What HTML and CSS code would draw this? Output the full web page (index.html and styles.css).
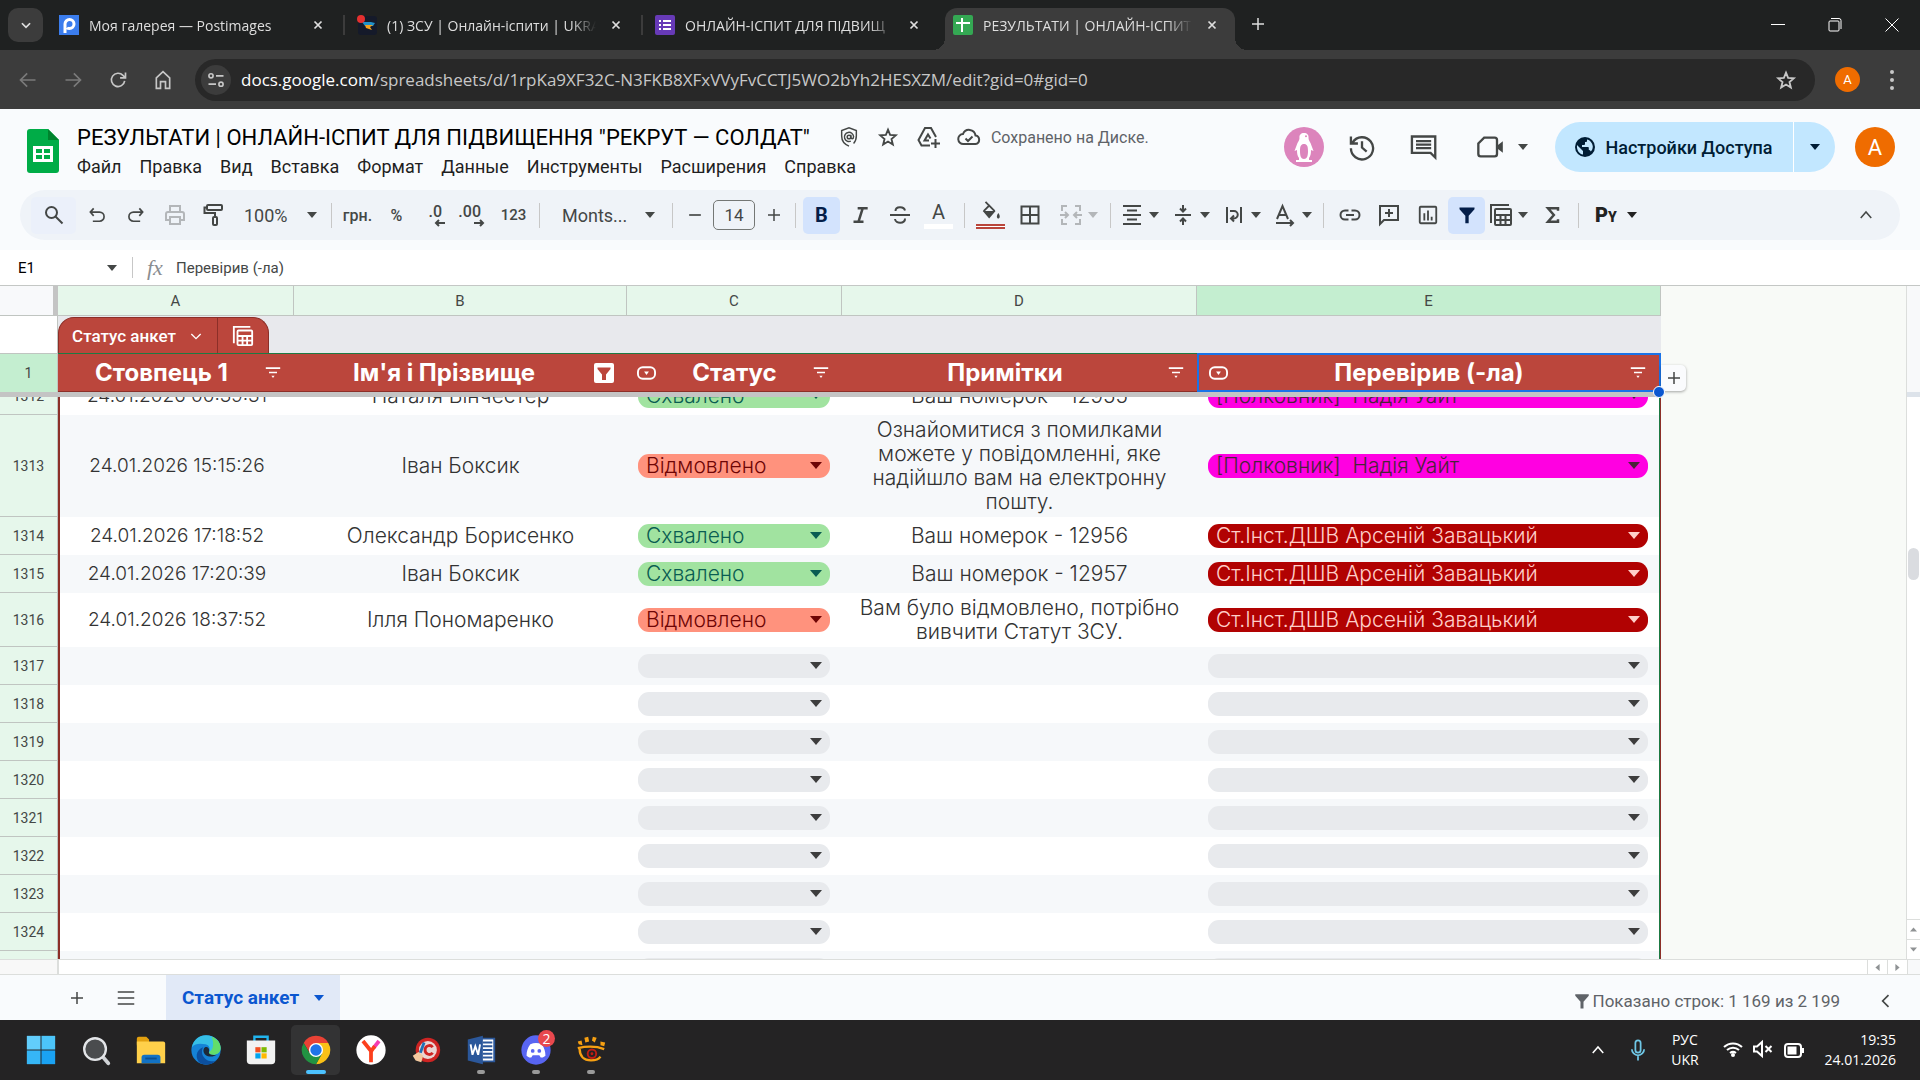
FILE: index.html
```html
<!DOCTYPE html>
<html lang="ru">
<head>
	<meta charset="UTF-8">
	<title>РЕЗУЛЬТАТИ | ОНЛАЙН-ІСПИТ</title>
	<link rel="stylesheet" href="styles.css">
</head>
<body>

	<!-- icon sprite -->
	<svg class="sprite" aria-hidden="true">
		<symbol id="i-close" viewBox="0 0 24 24"><path d="M6 6l12 12M18 6L6 18"/></symbol>
		<symbol id="i-plus" viewBox="0 0 24 24"><path d="M12 4v16M4 12h16"/></symbol>
		<symbol id="i-minus" viewBox="0 0 24 24"><path d="M5 12h14"/></symbol>
		<symbol id="i-down" viewBox="0 0 24 24"><path d="M5 9l7 7 7-7"/></symbol>
		<symbol id="i-up" viewBox="0 0 24 24"><path d="M5 16l7-8 7 8"/></symbol>
		<symbol id="i-left" viewBox="0 0 24 24"><path d="M15 5l-7 7 7 7"/></symbol>
		<symbol id="i-caret" viewBox="0 0 10 6"><path class="fill" d="M0 0h10L5 6z"/></symbol>
		<symbol id="i-star" viewBox="0 0 24 24"><path d="M12 4l2.300 5.700 6.200.500-4.700 4 1.500 6L12 17l-5.300 3.200 1.500-6-4.700-4 6.200-.5z"/></symbol>
		<symbol id="i-funnel" viewBox="0 0 24 24"><path class="fill" d="M3 3h18v2l-7 8v9h-4v-9L3 5z"/></symbol>
		<symbol id="i-sort" viewBox="0 0 20 16"><path d="M1 2.500h18M5 8h10"/><path class="fill" d="M8 12h4l-2 3z"/></symbol>
		<symbol id="i-type" viewBox="0 0 20 14"><rect x="1" y="1" width="18" height="12" rx="5"/><path class="fill" d="M7.500 5.500h5l-2.500 3.500z"/></symbol>
		<symbol id="i-calc" viewBox="0 0 24 24"><path d="M2 20V2h18"/><rect x="6" y="6" width="16" height="16" rx="1"/><path d="M6 12h16M6 17h16M11.500 12v10M16.500 12v10"/></symbol>
	</svg>

	<div class="tab-strip">
		<button class="tab-search" aria-label="Поиск вкладок"><svg class="s14"><use href="#i-down"/></svg></button>
		<div class="tabs">
			<div class="tab">
				<svg class="fav" viewBox="0 0 20 20"><rect class="c-post" width="20" height="20"/><path class="post-p" d="M6 18V9a4.500 4.500 0 1 1 4.500 4.500c-1 0-2-.3-2.500-.8"/></svg>
				<span class="tab-title">Моя галерея — Postimages</span>
				<button class="tab-close" aria-label="Закрыть"><svg class="s14"><use href="#i-close"/></svg></button>
			</div>
			<div class="tab">
				<svg class="fav" viewBox="0 0 20 20"><rect class="c-navy" x="1" y="1" width="19" height="19" rx="3"/><path fill="#2191c9" d="M5 7h9l4 1-2 3H8z"/><path fill="#f5a21d" d="M8 10h8l-3 2 2 3-6-2z"/><circle fill="#e5302f" cx="4" cy="4" r="4"/></svg>
				<span class="tab-title">(1) ЗСУ | Онлайн-іспити | UKRA</span>
				<button class="tab-close" aria-label="Закрыть"><svg class="s14"><use href="#i-close"/></svg></button>
			</div>
			<div class="tab">
				<svg class="fav" viewBox="0 0 20 20"><rect fill="#673ab7" width="20" height="20" rx="2"/><path stroke="#fff" stroke-width="2" d="M4 6h2M8 6h8M4 10h2M8 10h8M4 14h2M8 14h8"/></svg>
				<span class="tab-title">ОНЛАЙН-ІСПИТ ДЛЯ ПІДВИЩ</span>
				<button class="tab-close" aria-label="Закрыть"><svg class="s14"><use href="#i-close"/></svg></button>
			</div>
			<div class="tab active">
				<svg class="fav" viewBox="0 0 20 20"><rect fill="#34a853" width="20" height="20" rx="2"/><path stroke="#fff" stroke-width="2" d="M9 3v14M3 8h14"/></svg>
				<span class="tab-title">РЕЗУЛЬТАТИ | ОНЛАЙН-ІСПИТ</span>
				<button class="tab-close" aria-label="Закрыть"><svg class="s14"><use href="#i-close"/></svg></button>
			</div>
		</div>
		<button class="new-tab" aria-label="Новая вкладка"><svg class="s18"><use href="#i-plus"/></svg></button>
		<div class="window-btns">
			<button aria-label="Свернуть"><svg viewBox="0 0 14 14"><path d="M0 6.500h14"/></svg></button>
			<button aria-label="Восстановить"><svg viewBox="0 0 14 14"><rect x="1" y="3" width="10" height="10" rx="1"/><path d="M3 .5h8a2 2 0 0 1 2 2V11"/></svg></button>
			<button aria-label="Закрыть окно"><svg viewBox="0 0 14 14"><path d="M.5.5l13 13M13.500.5l-13 13"/></svg></button>
		</div>
	</div>

	<div class="address-row">
		<button class="nav dim" aria-label="Назад"><svg class="s20" viewBox="0 0 24 24"><path d="M21 12H4M11 4l-8 8 8 8"/></svg></button>
		<button class="nav dim" aria-label="Вперёд"><svg class="s20" viewBox="0 0 24 24"><path d="M3 12h17M13 4l8 8-8 8"/></svg></button>
		<button class="nav" aria-label="Обновить"><svg class="s20" viewBox="0 0 24 24"><path d="M20 13a8 8 0 1 1-2-6.500L20.500 9M21 3v6.500h-6.500"/></svg></button>
		<button class="nav" aria-label="Главная"><svg class="s20" viewBox="0 0 24 24"><path d="M4 9.500L12 2l8 7.500V22h-5v-8H9v8H4z"/></svg></button>
		<div class="omnibox">
			<button class="site-info" aria-label="Сведения о сайте"><svg class="s20" viewBox="0 0 24 24"><circle cx="6" cy="7" r="2.500"/><path d="M12 7h9M3 17h9"/><circle cx="18" cy="17" r="2.500"/></svg></button>
			<a class="url" href="#"><b>docs.google.com</b>/spreadsheets/d/1rpKa9XF32C-N3FKB8XFxVVyFvCCTJ5WO2bYh2HESXZM/edit?gid=0#gid=0</a>
			<button class="bookmark" aria-label="Добавить в закладки"><svg class="s22"><use href="#i-star"/></svg></button>
		</div>
		<button class="profile" aria-label="Профиль">A</button>
		<button class="more" aria-label="Меню"><svg viewBox="0 0 6 22"><circle cx="3" cy="3" r="2"/><circle cx="3" cy="11" r="2"/><circle cx="3" cy="19" r="2"/></svg></button>
	</div>

	<header class="doc-header">
		<svg class="logo" viewBox="0 0 32 44"><path fill="#00ac47" d="M3 0h18l11 11v30a3 3 0 0 1-3 3H3a3 3 0 0 1-3-3V3a3 3 0 0 1 3-3z"/><path fill="#00832d" d="M21 0l11 11H21z"/><path fill="#fff" fill-rule="evenodd" d="M6 17h20v16H6zm3 3v4h6v-4zm8 0v4h6v-4zm-8 6v4h6v-4zm8 0v4h6v-4z"/></svg>
		<div class="doc-main">
			<div class="title-row">
				<h1>РЕЗУЛЬТАТИ | ОНЛАЙН-ІСПИТ ДЛЯ ПІДВИЩЕННЯ "РЕКРУТ — СОЛДАТ"</h1>
				<div class="title-icons">
					<svg class="s22 fine" viewBox="0 0 24 24"><path d="M12 22C7 20 4 16 4 11V5l8-3 8 3v6c0 3-1 6-3 8"/><circle cx="12" cy="12" r="2"/><path d="M14 9.500V12c0 2.500 3 2.500 3-.5a5 5 0 1 0-3 5"/></svg>
					<svg class="s22"><use href="#i-star"/></svg>
					<svg class="s24" viewBox="0 0 24 24"><path d="M14 20.500H5.500L2.500 15 9 3h6l5 9M13 15.500H8.500L12 9.500l2.500 4M19.500 14v9M15 18.500h9"/></svg>
					<svg class="s24" viewBox="0 0 24 24"><path d="M6.500 19a5 5 0 0 1-.5-10A6.500 6.500 0 0 1 18.500 10.500a4.300 4.300 0 0 1 0 8.500zM8.500 13.500l2.500 2.500 4.500-4.500"/></svg>
				</div>
				<span class="saved">Сохранено на Диске.</span>
			</div>
			<nav class="menus">
				<button>Файл</button>
				<button>Правка</button>
				<button>Вид</button>
				<button>Вставка</button>
				<button>Формат</button>
				<button>Данные</button>
				<button>Инструменты</button>
				<button>Расширения</button>
				<button>Справка</button>
			</nav>
		</div>
		<div class="doc-side">
			<div class="anon"><svg viewBox="0 0 40 40"><path fill="#fff" fill-rule="evenodd" d="M20 6c3 0 5 2 4.500 5 0 2 1 3 2 5l3 8-2.500-1c0 4-.5 6-2 8v2h3v2H12v-2h3v-2c-1.500-2-2-4-2-8l-2.500 1 3-8c1-2 2-3 2-5C15 8 17 6 20 6zm0 11c-3 0-4 2-4 7s1 8 4 8 4-3 4-8-1-7-4-7zM21 9.200a1 1 0 1 0 2 0 1 1 0 0 0-2 0z"/></svg></div>
			<button aria-label="История версий"><svg class="s28" viewBox="0 0 24 24"><path d="M2.500 3v6h6M4 8a9.500 9.500 0 1 1-1.500 5M12 7v5.500l4 3.500"/></svg></button>
			<button aria-label="Комментарии"><svg class="s28" viewBox="0 0 24 24"><path d="M2.500 3h20v18l-4-4h-16zM6 7h13M6 10h13M6 13h13"/></svg></button>
			<button class="meet" aria-label="Видеовстреча"><svg class="s28" viewBox="0 0 24 24"><path d="M7 4h9a2 2 0 0 1 2 2v12a2 2 0 0 1-2 2H4a2 2 0 0 1-2-2V9z"/><path class="fill" d="M18 11l5-4v10l-5-4z"/></svg><svg class="caret"><use href="#i-caret"/></svg></button>
			<div class="share">
				<button class="share-main"><svg class="globe" viewBox="0 0 20 20"><circle class="fill" cx="10" cy="10" r="10"/><path fill="#c2e7ff" d="M2 8l6 6v3.500C4 17 1.500 13 2 8zM12 2.500c3 .5 5.500 3.500 5.800 7 0 2-.8 4-2 5-.5-1-1-1.500-2-1.500V11c0-.6-.4-1-1-1H7V8h2c.5 0 1-.5 1-1V5h1c.600 0 1-.5 1-1z"/></svg>Настройки Доступа</button>
				<button class="share-more" aria-label="Быстрые действия"><svg class="caret"><use href="#i-caret"/></svg></button>
			</div>
			<button class="account" aria-label="Аккаунт">A</button>
		</div>
	</header>

	<div class="toolbar-wrap">
		<div class="toolbar">
			<button class="find" aria-label="Поиск"><svg class="s24" viewBox="0 0 24 24"><circle cx="9.500" cy="9.500" r="5.500"/><path d="M13.500 13.500l7 7"/></svg></button>
			<button aria-label="Отменить"><svg class="s20" viewBox="0 0 24 24"><path d="M8 4L4 8.500 8 13M4.500 8.500H15a5 5 0 0 1 0 11H7"/></svg></button>
			<button aria-label="Повторить"><svg class="s20" viewBox="0 0 24 24"><path d="M16 4l4 4.500-4 4.500M19.500 8.500H9a5 5 0 0 0 0 11h8"/></svg></button>
			<button class="off" aria-label="Печать"><svg class="s24" viewBox="0 0 24 24"><path d="M7 8V3h10v5M7 17H3v-6a2 2 0 0 1 2-2h14a2 2 0 0 1 2 2v6h-4M7 14h10v7H7z"/></svg></button>
			<button aria-label="Копировать форматирование"><svg class="s24" viewBox="0 0 24 24"><rect x="5" y="2" width="15" height="5" rx="1"/><path d="M5 4.500H2.500V10H13v4"/><rect x="11" y="14" width="4" height="8" rx="1"/></svg></button>
			<button class="combo zoom">100%<svg class="caret"><use href="#i-caret"/></svg></button>
			<i class="sep"></i>
			<button class="word">грн.</button>
			<button class="word">%</button>
			<button aria-label="Меньше знаков"><span class="dec">.0</span><svg class="dec-arrow" viewBox="0 0 12 8"><path d="M11 4H2M5 1L2 4l3 3"/></svg></button>
			<button aria-label="Больше знаков"><span class="dec">.00</span><svg class="dec-arrow" viewBox="0 0 12 8"><path d="M1 4h9M7 1l3 3-3 3"/></svg></button>
			<button class="num">123</button>
			<i class="sep"></i>
			<button class="combo font">Monts...<svg class="caret"><use href="#i-caret"/></svg></button>
			<i class="sep"></i>
			<button class="step" aria-label="Уменьшить"><svg class="s20"><use href="#i-minus"/></svg></button>
			<input class="size" type="text" value="14" aria-label="Размер шрифта">
			<button class="step" aria-label="Увеличить"><svg class="s18"><use href="#i-plus"/></svg></button>
			<i class="sep"></i>
			<button class="on bold">B</button>
			<button aria-label="Курсив"><svg class="s20" viewBox="0 0 24 24"><path class="thick" d="M8 4h12M3 20h12M14 4l-5 16"/></svg></button>
			<button aria-label="Зачёркнутый"><svg class="s24" viewBox="0 0 24 24"><path d="M2 12h20M17 7.500C16 3 7.500 3 7.500 8M7 16c.5 5 10.500 5 10-.5"/></svg></button>
			<button class="colored text-color">A</button>
			<i class="sep"></i>
			<button class="colored fill-color" aria-label="Цвет заливки"><svg class="s22" viewBox="0 0 24 24"><path d="M6 1l4 4M4 11l6-6 6 6"/><path class="fill" d="M3 11h14l-7 8zM20 13c3 4 1 6 0 6s-3-2 0-6z"/></svg></button>
			<button aria-label="Границы"><svg class="s24" viewBox="0 0 24 24"><path d="M3.500 3.500h17v17h-17zM12 4v16M4 12h16"/></svg></button>
			<button class="drop merge off" aria-label="Объединить"><svg class="s24" viewBox="0 0 24 24"><path d="M8 3H3v5M3 16v5h5M16 3h5v5M21 16v5h-5M1 12h8M6 9l3 3-3 3M23 12h-8M18 9l-3 3 3 3"/></svg><svg class="caret"><use href="#i-caret"/></svg></button>
			<i class="sep"></i>
			<div class="drops">
				<button class="drop" aria-label="По горизонтали"><svg class="s24" viewBox="0 0 24 24"><path d="M3 3h18M7 7.500h10M3 12h18M7 16.500h10M3 21h18"/></svg><svg class="caret"><use href="#i-caret"/></svg></button>
				<button class="drop" aria-label="По вертикали"><svg class="s24" viewBox="0 0 24 24"><path d="M4 12h16M12 2v6M9 5.500L12 8.500l3-3M12 22v-6M9 18.500l3-3 3 3"/></svg><svg class="caret"><use href="#i-caret"/></svg></button>
				<button class="drop" aria-label="Перенос текста"><svg class="s24" viewBox="0 0 24 24"><path d="M5 4v16M19 4v16M8 8h4a3.500 3.500 0 0 1 0 7.500H9M12 12.500l-3 3 3 3"/></svg><svg class="caret"><use href="#i-caret"/></svg></button>
				<button class="drop" aria-label="Поворот текста"><svg class="s24" viewBox="0 0 24 24"><path d="M4 16L9.500 3l5.500 13M6 12h7M3 20h17M17 17l3 3-3 3"/></svg><svg class="caret"><use href="#i-caret"/></svg></button>
			</div>
			<i class="sep"></i>
			<button aria-label="Ссылка"><svg class="s24" viewBox="0 0 24 24"><path d="M10.500 7.500H7a4.500 4.500 0 0 0 0 9h3.500M13.500 7.500H17a4.500 4.500 0 0 1 0 9h-3.500M8 12h8"/></svg></button>
			<button aria-label="Комментарий"><svg class="s24" viewBox="0 0 24 24"><path d="M3 21V3h18v14H7zM12 6v8M8 10h8"/></svg></button>
			<button aria-label="Диаграмма"><svg class="s22" viewBox="0 0 24 24"><rect x="3" y="3" width="18" height="18" rx="1"/><path d="M8 10v8M12 7v11M16 14v4"/></svg></button>
			<button class="on" aria-label="Фильтр"><svg class="s20"><use href="#i-funnel"/></svg></button>
			<button class="drop" aria-label="Таблицы"><svg class="s24"><use href="#i-calc"/></svg><svg class="caret"><use href="#i-caret"/></svg></button>
			<button aria-label="Функции"><svg class="s20" viewBox="0 0 24 24"><path class="thick" d="M18 7V4H6l7 8-7 8h12v-3"/></svg></button>
			<i class="sep"></i>
			<button class="py">P<small>Y</small><svg class="caret"><use href="#i-caret"/></svg></button>
			<button class="collapse" aria-label="Скрыть меню"><svg class="s18"><use href="#i-up"/></svg></button>
		</div>
	</div>

	<div class="formula">
		<div class="name-box"><input type="text" value="E1" aria-label="Ячейка"><svg class="caret"><use href="#i-caret"/></svg></div>
		<label class="fx" for="fx">fx</label>
		<input id="fx" type="text" value="Перевірив (-ла)">
	</div>

	<main class="grid">
		<div class="cells">
			<table class="frozen">
				<colgroup><col class="w-n"><col class="w-a"><col class="w-b"><col class="w-c"><col class="w-d"><col class="w-e"></colgroup>
				<tr class="letters"><th class="corner"></th><th>A</th><th>B</th><th>C</th><th>D</th><th class="sel">E</th></tr>
				<tr class="band">
					<td></td>
					<td colspan="5">
						<div class="table-tab">
							<button class="table-name">Статус анкет<svg class="s16"><use href="#i-down"/></svg></button>
							<button class="table-view" aria-label="Вид таблицы"><svg class="s22"><use href="#i-calc"/></svg></button>
						</div>
					</td>
				</tr>
				<tr class="heads">
					<th class="rn">1</th>
					<th><div class="head"><span>Стовпець 1</span><svg class="sort"><use href="#i-sort"/></svg></div></th>
					<th><div class="head"><span>Ім'я і Прізвище</span><svg class="filtered" viewBox="0 0 20 20"><rect width="20" height="20" rx="2"/><path d="M3.500 4.500h13v1.500L12 11.500V17H8v-5.500L3.500 6z"/></svg></div></th>
					<th><div class="head"><svg class="type"><use href="#i-type"/></svg><span>Статус</span><svg class="sort"><use href="#i-sort"/></svg></div></th>
					<th><div class="head"><span>Примітки</span><svg class="sort"><use href="#i-sort"/></svg></div></th>
					<th class="picked"><div class="head"><svg class="type"><use href="#i-type"/></svg><span>Перевірив (-ла)</span><svg class="sort"><use href="#i-sort"/></svg></div><i class="handle"></i><button class="add-col" aria-label="Добавить столбец"><svg class="s18"><use href="#i-plus"/></svg></button></th>
				</tr>
			</table>
			<div class="freeze-bar"></div>
			<div class="scroller">
				<table class="rows">
					<colgroup><col class="w-n"><col class="w-a"><col class="w-b"><col class="w-c"><col class="w-d"><col class="w-e"></colgroup>
					<tbody>
						<tr><th>1312</th><td>24.01.2026 00:39:31</td><td>Наталя Вінчестер</td><td><div class="chip ok"><select aria-label="Статус 1312"><option>Схвалено</option></select></div></td><td>Ваш номерок - 12955</td><td><div class="chip pink"><select aria-label="Перевірив 1312"><option>[Полковник]&nbsp; Надія Уайт</option></select></div></td></tr>
						<tr><th>1313</th><td>24.01.2026 15:15:26</td><td>Іван Боксик</td><td><div class="chip no"><select aria-label="Статус 1313"><option>Відмовлено</option></select></div></td><td>Ознайомитися з помилками можете у повідомленні, яке надійшло вам на електронну пошту.</td><td><div class="chip pink"><select aria-label="Перевірив 1313"><option>[Полковник]&nbsp; Надія Уайт</option></select></div></td></tr>
						<tr><th>1314</th><td>24.01.2026 17:18:52</td><td>Олександр Борисенко</td><td><div class="chip ok"><select aria-label="Статус 1314"><option>Схвалено</option></select></div></td><td>Ваш номерок - 12956</td><td><div class="chip dark"><select aria-label="Перевірив 1314"><option>Ст.Інст.ДШВ Арсеній Завацький</option></select></div></td></tr>
						<tr><th>1315</th><td>24.01.2026 17:20:39</td><td>Іван Боксик</td><td><div class="chip ok"><select aria-label="Статус 1315"><option>Схвалено</option></select></div></td><td>Ваш номерок - 12957</td><td><div class="chip dark"><select aria-label="Перевірив 1315"><option>Ст.Інст.ДШВ Арсеній Завацький</option></select></div></td></tr>
						<tr><th>1316</th><td>24.01.2026 18:37:52</td><td>Ілля Пономаренко</td><td><div class="chip no"><select aria-label="Статус 1316"><option>Відмовлено</option></select></div></td><td>Вам було відмовлено, потрібно вивчити Статут ЗСУ.</td><td><div class="chip dark"><select aria-label="Перевірив 1316"><option>Ст.Інст.ДШВ Арсеній Завацький</option></select></div></td></tr>
						<tr><th>1317</th><td></td><td></td><td><div class="chip"><select aria-label="Статус 1317"></select></div></td><td></td><td><div class="chip"><select aria-label="Перевірив 1317"></select></div></td></tr>
						<tr><th>1318</th><td></td><td></td><td><div class="chip"><select aria-label="Статус 1318"></select></div></td><td></td><td><div class="chip"><select aria-label="Перевірив 1318"></select></div></td></tr>
						<tr><th>1319</th><td></td><td></td><td><div class="chip"><select aria-label="Статус 1319"></select></div></td><td></td><td><div class="chip"><select aria-label="Перевірив 1319"></select></div></td></tr>
						<tr><th>1320</th><td></td><td></td><td><div class="chip"><select aria-label="Статус 1320"></select></div></td><td></td><td><div class="chip"><select aria-label="Перевірив 1320"></select></div></td></tr>
						<tr><th>1321</th><td></td><td></td><td><div class="chip"><select aria-label="Статус 1321"></select></div></td><td></td><td><div class="chip"><select aria-label="Перевірив 1321"></select></div></td></tr>
						<tr><th>1322</th><td></td><td></td><td><div class="chip"><select aria-label="Статус 1322"></select></div></td><td></td><td><div class="chip"><select aria-label="Перевірив 1322"></select></div></td></tr>
						<tr><th>1323</th><td></td><td></td><td><div class="chip"><select aria-label="Статус 1323"></select></div></td><td></td><td><div class="chip"><select aria-label="Перевірив 1323"></select></div></td></tr>
						<tr><th>1324</th><td></td><td></td><td><div class="chip"><select aria-label="Статус 1324"></select></div></td><td></td><td><div class="chip"><select aria-label="Перевірив 1324"></select></div></td></tr>
						<tr><th></th><td></td><td></td><td><div class="chip"><select aria-label="Статус 1325"></select></div></td><td></td><td><div class="chip"><select aria-label="Перевірив 1325"></select></div></td></tr>
					</tbody>
				</table>
			</div>
		</div>
		<div class="vscroll">
			<div class="vscroll-top"></div>
			<div class="track"><i class="thumb"></i></div>
			<button class="arrow up" aria-label="Вверх"><svg class="tiny"><use href="#i-caret"/></svg></button>
			<button class="arrow" aria-label="Вниз"><svg class="tiny"><use href="#i-caret"/></svg></button>
		</div>
	</main>
	<div class="hscroll">
		<i class="hscroll-corner"></i>
		<button class="arrow prev" aria-label="Влево"><svg class="tiny"><use href="#i-caret"/></svg></button>
		<button class="arrow next" aria-label="Вправо"><svg class="tiny"><use href="#i-caret"/></svg></button>
		<i class="hscroll-end"></i>
	</div>

	<footer class="sheets">
		<button class="sheet-btn" aria-label="Добавить лист"><svg class="s18"><use href="#i-plus"/></svg></button>
		<button class="sheet-btn" aria-label="Все листы"><svg class="s18" viewBox="0 0 24 24"><path d="M1 4h22M1 12h22M1 20h22"/></svg></button>
		<button class="sheet-tab">Статус анкет<svg class="caret"><use href="#i-caret"/></svg></button>
		<p class="count"><svg class="s18"><use href="#i-funnel"/></svg>Показано строк: 1 169 из 2 199</p>
		<button class="side-toggle" aria-label="Боковая панель"><svg class="s20"><use href="#i-left"/></svg></button>
	</footer>

	<div class="taskbar">
		<div class="apps">
			<button aria-label="Пуск"><svg viewBox="0 0 36 36"><path fill="#62cdfb" d="M3 3h14.500v14.500H3z"/><path fill="#4cc5fa" d="M18.500 3H33v14.500H18.500z"/><path fill="#36b6f6" d="M3 18.500h14.500V33H3z"/><path fill="#1aa2f3" d="M18.500 18.500H33V33H18.500z"/></svg></button>
			<button aria-label="Поиск"><svg viewBox="0 0 36 36"><path stroke="#cfd2d6" stroke-width="4" stroke-linecap="round" d="M25 25l6 7"/><circle cx="17" cy="17" r="11.500" fill="#4a4c4e" stroke="#e3e5e8" stroke-width="2.500"/></svg></button>
			<button aria-label="Проводник"><svg viewBox="0 0 36 36"><path fill="#e2a00f" d="M3 6a2 2 0 0 1 2-2h8l3 3v6H3z"/><path fill="#ffd04a" d="M3 9h28a2 2 0 0 1 2 2v21H3z"/><path fill="#1272c4" d="M8 32v-6a3 3 0 0 1 3-3h14a3 3 0 0 1 3 3v6z"/><path stroke="#0a4f91" stroke-width="2" d="M12 27h12"/></svg></button>
			<button aria-label="Edge"><svg viewBox="0 0 36 36"><circle cx="18" cy="18" r="15.500" fill="#1583d6"/><path fill="#36bfe6" d="M3 15C5 7 11 2.500 18 2.500c9 0 15.500 6 15.500 13.500 0 4-3 7-7 7-4 0-6-1-5-3 1-4 0-7-4-8-6-1-11-1-14.500 3z"/><path fill="#62dd6a" d="M24 4c6 2 9.500 7 9.500 12 0 4-3 7-7 7-4 0-6-1-5-3 3-1 6-7 2.500-16z"/><path fill="#0c4f9e" d="M15 15c-4 7 2 15 10 15 2 0 4-1 5-2.500-4 6-12 7.500-18 4.500-6-5-5-14 3-17z"/><path fill="#1d2a38" d="M17 15c-3 2-2 8 3 9.500 4 1 7 0 9-1.500-4 1-8 0-8-2.500 1-3 0-6-4-5.500z"/></svg></button>
			<button aria-label="Microsoft Store"><svg viewBox="0 0 36 36"><path fill="none" stroke="#21b4ee" stroke-width="2.500" d="M11 10V4h14v6"/><path fill="#f2f2f2" d="M3 8h30v21a4 4 0 0 1-4 4H7a4 4 0 0 1-4-4z"/><path fill="#f25022" d="M12 15h5.500v5.500H12z"/><path fill="#7fba00" d="M18.500 15H24v5.500h-5.500z"/><path fill="#00a4ef" d="M12 21.500h5.500V27H12z"/><path fill="#ffb900" d="M18.500 21.500H24V27h-5.500z"/></svg></button>
			<button class="current" aria-label="Chrome"><svg viewBox="0 0 36 36"><path fill="#e94235" d="M5 10.500A15 15 0 0 1 31 10.500H18l-6.500 11z"/><path fill="#fbc116" d="M31 10.500A15 15 0 0 1 18 33l6.500-11.500L18 10.500z"/><path fill="#229342" d="M5 10.500l6.500 11.200 13 0L18 33A15 15 0 0 1 5 10.500z"/><circle cx="18" cy="18" r="7.500" fill="#fff"/><circle cx="18" cy="18" r="6" fill="#1f74e8"/></svg></button>
			<button aria-label="Яндекс"><svg viewBox="0 0 36 36"><circle cx="18" cy="18" r="15.500" fill="#fff"/><path fill="none" stroke="#fc3f1d" stroke-width="4" d="M9.500 8.500L18 19v12"/><path fill="none" stroke="#f43cb0" stroke-width="4" d="M26.500 8.500L21 15.500"/><path fill="none" stroke="#fc3f1d" stroke-width="4" d="M22 14l-4 5.500"/></svg></button>
			<button aria-label="CCleaner"><svg viewBox="0 0 36 36"><circle cx="20" cy="18" r="13" fill="#ce2423"/><circle cx="20" cy="18" r="9.500" fill="#e9d6d4"/><path fill="none" stroke="#ce2423" stroke-width="3" d="M25 15c-2-3-8-2-8 3s6 6 8 3"/><path stroke="#1f6fb5" stroke-width="3" d="M16 10l-4 11"/><path fill="#f3c9a0" d="M4 24l6-4 5 4-2 7-6-2z"/></svg></button>
			<button class="running" aria-label="Word"><svg viewBox="0 0 36 36"><path fill="#fff" stroke="#2b579a" stroke-width="2" d="M18 6h14v24H18z"/><path stroke="#2b579a" stroke-width="2" d="M20 10h10M20 14h10M20 18h10M20 22h10M20 26h10"/><path fill="#2b579a" d="M4 7l16-4v30L4 29z"/><path fill="none" stroke="#fff" stroke-width="2" d="M7 12l2 11 3-9 3 9 2-11"/></svg></button>
			<button class="running" aria-label="Discord"><svg viewBox="0 0 36 36"><circle cx="18" cy="18" r="15.500" fill="#5865f2"/><path fill="#fff" d="M12 12c4-2 8-2 12 0 3 4 4 8 4 12-2 2-4 2-5 2l-1.500-2.500h-7L13 26c-1 0-3 0-5-2 0-4 1-8 4-12z"/><circle cx="14.500" cy="19" r="2" fill="#5865f2"/><circle cx="21.500" cy="19" r="2" fill="#5865f2"/></svg><span class="badge">2</span></button>
			<button class="running" aria-label="Просмотр"><svg viewBox="0 0 36 36"><path fill="none" stroke="#f7a012" stroke-width="2.500" d="M4 16c9-2 20-2 28 1M6 17c0 7 4 12 12 12 5 0 8-1 10-4"/><circle cx="19" cy="22" r="4.500" fill="none" stroke="#c21d12" stroke-width="2"/><circle cx="19" cy="22" r="1.500" fill="#c21d12"/><path fill="#f7a012" d="M4 9l4-1 1 5-4-1zM11 5l4-1 1 5-4 1zM20 4l4 1-2 5-3-2zM28 9l5 1-1 4-4-1z"/></svg></button>
		</div>
		<div class="tray">
			<svg class="s18 tray-up"><use href="#i-up"/></svg>
			<svg class="mic" viewBox="0 0 16 24"><rect x="5" y="1" width="6" height="14" rx="3"/><path d="M1 11a7 7 0 0 0 14 0M8 18v6"/></svg>
			<div class="lang">РУС<br>UKR</div>
			<div class="status">
				<svg class="s20" viewBox="0 0 20 20"><path d="M1 8a13 13 0 0 1 18 0M4 11a9 9 0 0 1 12 0M7 14a5 5 0 0 1 6 0"/><circle class="fill" cx="10" cy="16" r="2"/></svg>
				<svg class="s20" viewBox="0 0 20 20"><path d="M1 7.500h3L9 3v14l-5-4.500H1zM12.500 7l6 6M18.500 7l-6 6"/></svg>
				<svg class="s22" viewBox="0 0 22 20"><rect x="2" y="4" width="16" height="13" rx="3"/><path class="fill" d="M4.500 6.500h9v8h-9zM19 8h2v5h-2z"/></svg>
			</div>
			<div class="clock">19:35<br>24.01.2026</div>
		</div>
	</div>

</body>
</html>
```

FILE: styles.css
```css
*{
	margin: 0;
	padding: 0;
	box-sizing: border-box;
}
body{
	height: 100vh;
	display: flex;
	flex-direction: column;
	overflow: hidden;
	font-family: Roboto, "Liberation Sans", sans-serif;
	color: #1f1f1f;
	background: #fff;
}
button, input, select{
	font: inherit;
	color: inherit;
	border: 0;
	background: none;
}
button{
	display: flex;
	align-items: center;
	justify-content: center;
	cursor: pointer;
	white-space: nowrap;
}
svg{
	flex: none;
	fill: none;
	stroke: currentColor;
	stroke-width: 2;
}
.sprite{
	display: none;
}
.fill{
	fill: currentColor;
	stroke: none;
}
.thick{
	stroke-width: 3;
}
.fine{
	stroke-width: 1.6;
}
.s14{ width: 14px; height: 14px; }
.s16{ width: 16px; height: 16px; }
.s18{ width: 18px; height: 18px; }
.s20{ width: 20px; height: 20px; }
.s22{ width: 22px; height: 22px; }
.s24{ width: 24px; height: 24px; }
.s28{ width: 28px; height: 28px; }
.caret{
	width: 10px;
	height: 6px;
}

/* browser tabs */
.tab-strip{
	height: 50px;
	display: flex;
	background: #1f2121;
	color: #dedede;
	font-family: "Open Sans", "Noto Sans", sans-serif;
	font-size: 14px;
}
.tab-search{
	width: 35px;
	height: 34px;
	margin: 8px;
	border-radius: 10px;
	background: #3c3c3c;
}
.tab-search svg, .tab-close svg{
	stroke-width: 3;
}
.tabs{
	display: flex;
	gap: 8px;
	padding-top: 8px;
}
.tab{
	width: 290px;
	padding: 0 15px 8px 8px;
	display: flex;
	align-items: center;
	position: relative;
}
.tab + .tab:not(.active):before{
	content: "";
	position: absolute;
	left: -6px;
	top: 7px;
	width: 2px;
	height: 20px;
	background: #3c3c3c;
}
.tab.active{
	background: #3c3c3c;
	border-radius: 12px 12px 0 0;
}
.tab.active:before, .tab.active:after{
	content: "";
	position: absolute;
	bottom: 0;
	width: 12px;
	height: 12px;
}
.tab.active:before{
	left: -12px;
	background: radial-gradient(circle at 0 0, #1f2121 12px, #3c3c3c 12px);
}
.tab.active:after{
	right: -12px;
	background: radial-gradient(circle at 100% 0, #1f2121 12px, #3c3c3c 12px);
}
.fav{
	width: 20px;
	height: 20px;
	stroke: none;
}
.c-post{
	fill: #3b7ded;
}
.post-p{
	stroke: #fff;
	stroke-width: 3;
}
.c-navy{
	fill: #151a2a;
}
.tab-title{
	flex: 1;
	min-width: 0;
	margin: 0 12px 0 10px;
	overflow: hidden;
	white-space: nowrap;
	mask-image: linear-gradient(to right, #000 88%, transparent);
}
.tab-close{
	width: 16px;
	height: 20px;
}
.new-tab{
	width: 30px;
	margin: 0 0 0 8px;
	padding-bottom: 2px;
}
.window-btns{
	margin-left: auto;
	display: flex;
}
.window-btns button{
	width: 57px;
}
.window-btns svg{
	width: 14px;
	height: 14px;
	stroke: #fff;
	stroke-width: 1;
}

.address-row{
	height: 59px;
	display: flex;
	align-items: center;
	background: #3c3c3c;
	color: #c7c7c7;
	padding: 0 8px 0 5px;
}
.nav{
	width: 45px;
	height: 40px;
}
.nav.dim{
	color: #7a7a7a;
}
.omnibox{
	flex: 1;
	height: 42px;
	margin: 0 20px 0 10px;
	padding: 0 18px 0 6px;
	display: flex;
	align-items: center;
	border-radius: 21px;
	background: #282828;
	font-family: "Open Sans", "Noto Sans", sans-serif;
	font-size: 17px;
}
.site-info{
	width: 30px;
	height: 30px;
	border-radius: 50%;
	background: #3c3c3c;
}
.url{
	flex: 1;
	margin-left: 10px;
	color: #c7c7c7;
	text-decoration: none;
}
.url b{
	font-weight: normal;
	color: #fff;
}
.profile{
	width: 25px;
	height: 25px;
	border-radius: 50%;
	background: #ef6c00;
	color: #fff;
	font-size: 13px;
}
.more{
	width: 40px;
	margin-left: 12px;
}
.more svg{
	width: 6px;
	height: 22px;
	fill: #c7c7c7;
	stroke: none;
}

/* document header */
.doc-header{
	height: 81px;
	padding: 0 25px 0 27px;
	display: flex;
	background: #f9fbfd;
	color: #444746;
}
.logo{
	width: 32px;
	height: 44px;
	margin-top: 20px;
	stroke: none;
}
.doc-main{
	padding: 12px 0 0 9px;
}
.title-row{
	height: 32px;
	padding-left: 9px;
	display: flex;
	align-items: center;
}
.title-row h1{
	font-size: 22px;
	font-weight: normal;
	color: #000;
	white-space: nowrap;
}
.title-icons{
	display: flex;
	align-items: center;
	gap: 17px;
	margin: 0 10px 0 28px;
}
.saved{
	font-size: 16px;
	color: #5f6368;
}
.menus{
	display: flex;
}
.menus button{
	height: 26px;
	padding: 0 9px;
	font-size: 18px;
	color: #1f1f1f;
}
.doc-side{
	margin-left: auto;
	height: 76px;
	display: flex;
	align-items: center;
}
.doc-side > button{
	width: 61px;
}
.anon{
	width: 40px;
	height: 40px;
	margin-right: 7px;
	border-radius: 50%;
	background: #dc84bc;
}
.anon svg{
	width: 40px;
	height: 40px;
	stroke: none;
}
.doc-side .meet{
	width: 94px;
	gap: 14px;
	padding-left: 4px;
}
.share{
	height: 50px;
	display: flex;
	border-radius: 25px;
	background: #c2e7ff;
	color: #001d35;
	margin: 0 20px 0 8px;
}
.share-main{
	width: 238px;
	gap: 10px;
	font-size: 18px;
	font-weight: 500;
}
.globe{
	width: 20px;
	height: 20px;
	stroke: none;
}
.share-more{
	width: 42px;
	border-left: 1px solid #fff;
}
.doc-side > .account{
	width: 40px;
	height: 40px;
	border-radius: 50%;
	background: #ef6c00;
	color: #fff;
	font-size: 22px;
}

/* toolbar */
.toolbar-wrap{
	height: 60px;
	padding: 0 20px 10px;
	background: #f9fbfd;
}
.toolbar{
	height: 50px;
	padding: 0 16px 0 11px;
	display: flex;
	align-items: center;
	gap: 2px;
	border-radius: 25px;
	background: #eff3f8;
	color: #444746;
}
.toolbar button{
	width: 37px;
	height: 37px;
	border-radius: 5px;
}
.toolbar .find{
	width: 45px;
	background: #ebf0fa;
}
.toolbar .off{
	color: #b3b6b9;
}
.toolbar .on{
	background: #d3e3fd;
	color: #041e49;
}
.toolbar .bold{
	font-size: 20px;
	font-weight: bold;
}
.sep{
	width: 1px;
	height: 25px;
	margin: 0 5px;
	background: #c7c7c7;
}
.toolbar .combo{
	justify-content: space-between;
	font-size: 18px;
	padding: 0 7px 0 10px;
}
.toolbar .zoom{
	width: 90px;
}
.toolbar .font{
	width: 118px;
	padding: 0 10px 0 15px;
}
.word{
	font-size: 16px;
	font-weight: 500;
}
.num{
	font-size: 15px;
	font-weight: 500;
}
.toolbar [aria-label*="знаков"]{
	flex-direction: column;
	align-items: flex-end;
	padding-right: 8px;
}
.dec{
	font-size: 16px;
	font-weight: 500;
	line-height: 15px;
	padding-right: 4px;
}
.dec-arrow{
	width: 12px;
	height: 8px;
}
.toolbar .step{
	width: 29px;
}
.size{
	width: 42px;
	height: 30px;
	margin: 0 2px;
	border: 1px solid #747775;
	border-radius: 5px;
	text-align: center;
	font-size: 17px;
}
.toolbar .colored{
	flex-direction: column;
	gap: 1px;
}
.toolbar .colored:after{
	content: "";
	width: 29px;
	height: 5px;
	background: #fff;
}
.text-color{
	font-size: 20px;
	line-height: 22px;
}
.toolbar .fill-color:after{
	background: linear-gradient(#b9453b 2px, #fff 2px, #fff 3px, #b9453b 3px);
}
.drops{
	display: flex;
	gap: 6px;
}
.toolbar .drop{
	width: 45px;
	gap: 5px;
	justify-content: flex-start;
	padding-left: 2px;
}
.toolbar .merge{
	width: 53px;
	padding-left: 9px;
}
.toolbar .py{
	width: 60px;
	align-items: baseline;
	line-height: 37px;
	font-size: 20px;
	font-weight: 900;
	color: #222;
}
.py small{
	font-size: 14px;
}
.py .caret{
	margin-left: 10px;
	align-self: center;
}
.toolbar .collapse{
	margin-left: auto;
}

.formula{
	height: 35px;
	display: flex;
	align-items: center;
	font-size: 15px;
}
.name-box{
	width: 133px;
	height: 21px;
	padding: 0 15px 0 18px;
	display: flex;
	align-items: center;
	border-right: 1px solid #c7c7c7;
	color: #444746;
}
.name-box input{
	flex: 1;
	min-width: 0;
	color: #000;
}
.fx{
	width: 43px;
	padding-left: 14px;
	font-family: "Liberation Serif", serif;
	font-style: italic;
	font-size: 22px;
	color: #8a8d90;
}
#fx{
	flex: 1;
	color: #444746;
}

/* spreadsheet */
.grid{
	flex: 1;
	min-height: 0;
	display: flex;
	border-top: 1px solid #c4c7c5;
	background: #f8faf7;
}
.cells{
	flex: 1;
	min-width: 0;
	display: flex;
	flex-direction: column;
	overflow: hidden;
}
table{
	table-layout: fixed;
	width: 1661px;
	border-spacing: 0;
}
.w-n{ width: 58px; }
.w-a{ width: 236px; }
.w-b{ width: 333px; }
.w-c{ width: 215px; }
.w-d{ width: 355px; }
.w-e{ width: 464px; }
.letters th{
	height: 30px;
	font-size: 15px;
	font-weight: normal;
	color: #444746;
	background: #e6f7eb;
	border-right: 1px solid #c0c5c1;
	border-bottom: 1px solid #c0c5c1;
}
.letters .corner{
	background: #f8f9fb;
	border-right: 5px solid #c4c4c4;
}
.letters .sel{
	background: #c4eed0;
}
.band td{
	height: 37px;
	background: #e8e9ed;
	vertical-align: bottom;
}
.band td:first-child{
	background: #fff;
	border-right: 1px solid #c0c5c1;
}
.table-tab{
	width: 211px;
	height: 36px;
	display: flex;
	border: 1px solid #8c2f28;
	border-bottom: 0;
	border-radius: 16px 16px 0 0;
	background: #bb463c;
	color: #fff;
}
.table-name{
	flex: 1;
	gap: 12px;
	font-size: 17px;
	font-weight: 500;
	border-right: 1px solid #8c2f28;
}
.table-view{
	width: 50px;
}
.heads th{
	height: 39px;
	background: #bb463c;
	color: #fff;
	border-top: 1px solid #1d7a43;
	border-bottom: 1px solid #8c2f28;
}
.heads .rn{
	background: #c4eed0;
	color: #444746;
	font-size: 14px;
	font-weight: normal;
	border-top: 1px solid #c0c5c1;
	border-right: 1px solid #c0c5c1;
	border-bottom: 0;
}
.head{
	display: flex;
	align-items: center;
	padding: 0 13px 0 0;
	font-family: Inter, "Open Sans", sans-serif;
	font-size: 24px;
	line-height: 30px;
}
.head span{
	flex: 1;
}
.sort{
	width: 16px;
	height: 13px;
}
.type{
	width: 19px;
	height: 14px;
	margin-left: 10px;
}
.filtered{
	width: 20px;
	height: 20px;
	fill: #fff;
	stroke: none;
}
.filtered path{
	fill: #bb463c;
}
.heads .picked{
	position: relative;
	border: 2px solid #1a73e8;
}
.handle{
	position: absolute;
	right: -6px;
	bottom: -8px;
	width: 12px;
	height: 12px;
	border-radius: 50%;
	border: 1px solid #fff;
	background: #0b57d0;
	z-index: 2;
}
.add-col{
	position: absolute;
	left: 100%;
	bottom: -1px;
	margin-left: 2px;
	width: 25px;
	height: 26px;
	border-radius: 0 5px 5px 0;
	background: #fafbfd;
	box-shadow: 0 1px 3px rgba(0, 0, 0, .35);
	color: #444746;
}
.freeze-bar{
	flex: none;
	width: 1661px;
	height: 5px;
	background: #c4c4c4;
}
.scroller{
	flex: 1;
	min-height: 0;
	overflow: hidden;
}
/* scrolled half a row down */
.rows{
	margin-top: -20px;
	background: #fff;
}
.rows th{
	height: 38px;
	font-size: 14px;
	font-weight: normal;
	color: #444746;
	background: #e6f7eb;
	border-right: 1px solid #c0c5c1;
	border-bottom: 1px solid #c0c5c1;
}
.rows td{
	padding: 3px 4px;
	text-align: center;
	font-family: Inter, "Open Sans", sans-serif;
	font-size: 21px;
	font-weight: 300;
	line-height: 24px;
	color: #333;
}
.rows td:nth-child(2){
	font-size: 19px;
	border-left: 2px solid #8c2f28;
}
.rows td:last-child{
	border-right: 1px solid #8c2f28;
	box-shadow: inset -1px 0 #1d7a43;
}
.rows tr:nth-child(even) td{
	background: #f6f8fa;
}
.chip{
	position: relative;
	height: 24px;
	margin: 0 8px 0 7px;
	border-radius: 11px;
	background: #e8eaed;
	color: #3d3d3d;
}
.chip:after{
	content: "";
	position: absolute;
	right: 8px;
	top: 8px;
	border: 6px solid transparent;
	border-top: 7px solid;
	border-bottom: 0;
	pointer-events: none;
}
.chip select{
	display: block;
	width: 100%;
	height: 24px;
	padding: 0 24px 0 8px;
	appearance: none;
}
.chip.ok{
	background: #a1e3a0;
	color: #0a5d52;
}
.chip.no{
	background: #ff927d;
	color: #6e0505;
}
.chip.pink{
	background: #ff00e1;
	color: #4a2338;
}
.chip.dark{
	background: #b10202;
	color: #ffcfc9;
}

.vscroll{
	width: 14px;
	display: flex;
	flex-direction: column;
	border-left: 1px solid #dcdedc;
	background: #fff;
}
.vscroll-top{
	height: 111px;
	background: #f8f9fa;
	border-bottom: 5px solid #dde3ea;
}
.track{
	flex: 1;
	padding-top: 151px;
}
.thumb{
	display: block;
	height: 32px;
	margin: 0 1px;
	border-radius: 6px;
	background: #dadce0;
}
.arrow{
	height: 20px;
	border-top: 1px solid #dcdedc;
	color: #8f9294;
}
.tiny{
	width: 7px;
	height: 5px;
}
.arrow.up svg{
	transform: rotate(180deg);
}
.hscroll{
	height: 16px;
	display: flex;
	border-top: 1px solid #dcdedc;
	border-bottom: 1px solid #dcdedc;
}
.hscroll-corner{
	width: 59px;
	margin-right: auto;
	background: #f8f8f8;
	border-right: 2px solid #dcdedc;
}
.hscroll .arrow{
	width: 20px;
	height: 14px;
	border-top: 0;
	border-left: 1px solid #dcdedc;
}
.arrow.prev svg{
	transform: rotate(90deg);
}
.arrow.next svg{
	transform: rotate(-90deg);
}
.hscroll-end{
	width: 13px;
	border-left: 1px solid #dcdedc;
	background: #f8f9fa;
}

.sheets{
	height: 45px;
	padding: 0 24px 0 52px;
	display: flex;
	background: #f9fbfd;
	color: #444746;
}
.sheet-btn{
	width: 49px;
}
.sheet-tab{
	width: 174px;
	margin-left: 16px;
	gap: 15px;
	background: #e1e9f7;
	color: #0b57d0;
	font-size: 19px;
	font-weight: bold;
}
.count{
	margin-left: auto;
	padding-top: 6px;
	display: flex;
	align-items: center;
	gap: 2px;
	font-size: 17px;
	color: #5f6368;
}
.side-toggle{
	margin-left: 36px;
	padding-top: 6px;
}

/* windows taskbar */
.taskbar{
	height: 60px;
	padding: 0 24px 0 16px;
	display: flex;
	align-items: center;
	justify-content: space-between;
	background: #242324;
	color: #fff;
	font-family: "Open Sans", "Noto Sans", sans-serif;
	font-size: 14px;
	line-height: 20px;
}
.apps{
	display: flex;
	gap: 6px;
}
.apps button{
	position: relative;
	width: 49px;
	height: 50px;
	border-radius: 5px;
}
.apps svg{
	width: 34px;
	height: 34px;
	stroke: none;
}
.apps .current{
	background: #333334;
}
.apps .running:after, .apps .current:after{
	content: "";
	position: absolute;
	bottom: 1px;
	left: 50%;
	margin-left: -4px;
	width: 8px;
	height: 4px;
	border-radius: 2px;
	background: #9a9a9a;
}
.apps .current:after{
	width: 20px;
	margin-left: -10px;
	background: #4cc2ff;
}
.badge{
	position: absolute;
	top: 5px;
	right: 5px;
	width: 17px;
	height: 17px;
	border-radius: 50%;
	background: #e8484e;
	font-size: 14px;
	line-height: 17px;
}
.tray{
	display: flex;
	align-items: center;
}
.tray-up{
	margin-right: 24px;
}
.mic{
	width: 14px;
	height: 22px;
	stroke: #6fc7e6;
	margin-right: 26px;
}
.lang{
	margin-right: 24px;
	text-align: center;
}
.status{
	display: flex;
	gap: 10px;
	margin-right: 20px;
}
.clock{
	text-align: right;
}
```
